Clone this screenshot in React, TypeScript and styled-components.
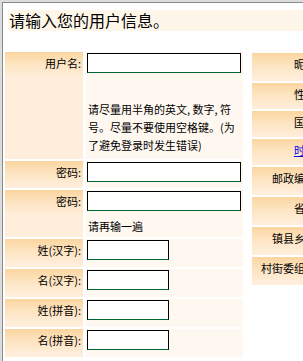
import React from 'react';
import styled, { createGlobalStyle } from 'styled-components';

const GlobalStyle = createGlobalStyle`
  html, body {
    margin: 0;
    padding: 0;
    overflow: hidden;
    background: #ffffff;
  }
`

const Frame = styled.div`
  width: 303px;
  height: 361px;
  box-sizing: border-box;
  border-top: 2px solid #dcdcdc;
  border-left: 2px solid #dcdcdc;
  overflow: hidden;
`

const Inner = styled.div`
  height: 100%;
  box-sizing: border-box;
  border-top: 1px solid #8a8a8a;
  border-left: 1px solid #8a8a8a;
  font-family: "Noto Sans CJK SC", "Noto Sans", sans-serif;
  color: #000;
  overflow: hidden;
`

const Heading = styled.div`
  margin: 7px 0 0 5px;
  width: 400px;
  height: 21px;
  padding-left: 1px;
  background: #fff6ea;
  font-size: 16px;
  line-height: 20px;
  white-space: nowrap;
`

const Main = styled.div`
  display: flex;
  align-items: flex-start;
  gap: 9px;
  margin-top: 21px;
  padding-left: 2px;
  width: 500px;
`

const FormGrid = styled.div`
  display: grid;
  grid-template-columns: 78px 157px;
  grid-template-rows: 107px 27px 47px 28px 28px 28px 28px;
  column-gap: 3px;
  row-gap: 2px;
`

const SideGrid = styled.div`
  display: grid;
  grid-template-columns: 69px;
  grid-template-rows: 28px 26px 26px 26px 28px 28px 28px 28px;
  row-gap: 2px;
  margin-top: 1px;
`

const Label = styled.div`
  background: linear-gradient(#fbd59f 0px, #fde4c2 12px, #ffeedb 26px) #ffefdc;
  text-align: right;
  padding: 1px 2px 0 0;
  font-size: 11px;
  line-height: 20px;
  white-space: nowrap;
`

const Value = styled.div`
  background: #fff8f0;
  padding: 1px 2px 0 1px;
  font-size: 11px;
`

const TextInput = styled.input<{ $short?: boolean }>`
  display: block;
  box-sizing: border-box;
  width: ${({ $short }) => ($short ? '82px' : '154px')};
  height: 20px;
  margin: 0;
  padding: 0 2px;
  background: #fff;
  border: 1px solid #000;
  border-bottom-color: #006633;
  outline: none;
`

const Note = styled.div<{ $top: number }>`
  margin-top: ${({ $top }) => $top}px;
  padding-left: 1px;
  line-height: 18px;
  white-space: nowrap;
`

const Link = styled.a`
  color: #0000ee;
  text-decoration: underline;
`

const nameRows = ['姓(汉字):', '名(汉字):', '姓(拼音):', '名(拼音):']

const sideRows = ['昵称:', '性别:', '国籍:', '时区:', '邮政编码:', '省份:', '镇县乡区:', '村街委组别:']

const App = () => {
  return (
    <>
      <GlobalStyle />
      <Frame>
        <Inner>
          <Heading>请输入您的用户信息。</Heading>
          <Main>
            <FormGrid>
              <Label>用户名:</Label>
              <Value>
                <TextInput type="text" />
                <Note $top={27}>
                  请尽量用半角的英文, 数字, 符<br />
                  号。尽量不要使用空格键。(为<br />
                  了避免登录时发生错误)
                </Note>
              </Value>

              <Label>密码:</Label>
              <Value>
                <TextInput type="password" />
              </Value>

              <Label>密码:</Label>
              <Value>
                <TextInput type="password" />
                <Note $top={6}>请再输一遍</Note>
              </Value>

              {nameRows.map((label) => (
                <React.Fragment key={label}>
                  <Label>{label}</Label>
                  <Value>
                    <TextInput type="text" $short />
                  </Value>
                </React.Fragment>
              ))}
            </FormGrid>

            <SideGrid>
              {sideRows.map((label) => (
                <Label key={label}>
                  {label === '时区:' ? <><Link href="#">时区</Link>:</> : label}
                </Label>
              ))}
            </SideGrid>
          </Main>
        </Inner>
      </Frame>
    </>
  );
};

export default App;
